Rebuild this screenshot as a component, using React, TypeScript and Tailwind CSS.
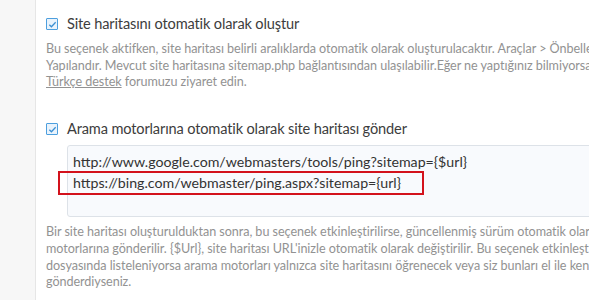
import React from 'react'

function CheckBox() {
  return (
    <span className="flex h-[12px] w-[12px] shrink-0 items-center justify-center rounded-[1px] border border-[#4d9fde] bg-[#e9f3fc]">
      <svg viewBox="0 0 10 10" className="h-[9px] w-[9px]" fill="none" stroke="#3a8fd3" strokeWidth="1.4">
        <path d="M1.5 5.2l2.3 2.3 4.7-5" />
      </svg>
    </span>
  )
}

const descClass = 'whitespace-nowrap text-[12.6px] leading-[16.7px] tracking-[-0.05px] text-[#929292]'
const titleClass = 'whitespace-nowrap text-[14.6px] leading-[20px] tracking-[-0.15px] text-[#3d3d3d]'

export default function App() {
  return (
    <div
      className="flex h-[300px] w-[589px] overflow-hidden bg-white"
      style={{ fontFamily: 'Lato, "Open Sans", sans-serif' }}
    >
      <div className="w-[36px] shrink-0 border-r border-[#e6e6e6] bg-[#f7f7f7]" />

      <div className="min-w-0 flex-1 pl-[10px] pt-[14px]">
        <label className="flex items-center gap-[9px]">
          <CheckBox />
          <span className={titleClass}>Site haritasını otomatik olarak oluştur</span>
        </label>

        <div className={`${descClass} mt-[7px]`}>
          <div>Bu seçenek aktifken, site haritası belirli aralıklarda otomatik olarak oluşturulacaktır. Araçlar &gt; Önbellek</div>
          <div>Yapılandır. Mevcut site haritasına sitemap.php bağlantısından ulaşılabilir.Eğer ne yaptığınız bilmiyorsanız</div>
          <div>
            <span className="underline">Türkçe destek</span> forumuzu ziyaret edin.
          </div>
        </div>

        <label className="mt-[28px] flex items-center gap-[9px]">
          <CheckBox />
          <span className={titleClass}>Arama motorlarına otomatik olarak site haritası gönder</span>
        </label>

        <div className="relative ml-[21px] mt-[6px] h-[72px] w-[600px] rounded-[3px] border border-[#dde2e8] bg-[#f8fafd] px-[5px] pt-[5px] text-[14.2px] leading-[21px] text-[#333]">
          <div className="whitespace-nowrap">http://www.google.com/webmasters/tools/ping?sitemap={'{$url}'}</div>
          <div className="whitespace-nowrap">https://bing.com/webmaster/ping.aspx?sitemap={'{url}'}</div>
          <div className="absolute left-[-10px] top-[25px] h-[24px] w-[366px] border-[2.5px] border-[#d3121c]" />
        </div>

        <div className={`${descClass} mt-[7px]`}>
          <div>Bir site haritası oluşturulduktan sonra, bu seçenek etkinleştirilirse, güncellenmiş sürüm otomatik olarak arama</div>
          <div>motorlarına gönderilir. {'{$Url}'}, site haritası URL'inizle otomatik olarak değiştirilir. Bu seçenek etkinleştirilirse robots.txt</div>
          <div>dosyasında listeleniyorsa arama motorları yalnızca site haritasını öğrenecek veya siz bunları el ile kendiniz</div>
          <div>gönderdiyseniz.</div>
        </div>
      </div>
    </div>
  )
}
